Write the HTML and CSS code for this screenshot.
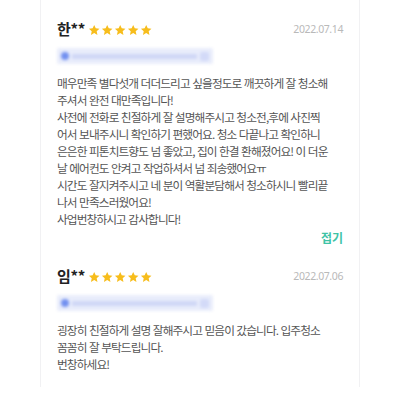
FILE: index.html
```
<!DOCTYPE html>
<html lang="ko">
<head>
<meta charset="utf-8">
<link rel="stylesheet" href="styles.css">
</head>
<body>
<div class="panel">
  <section class="review">
    <div class="head">
      <span class="name">한**</span>
      <span class="stars">
        <svg viewBox="0 0 24 24"><path d="M12 1.8l3 6.6 7.2.8-5.4 4.9 1.5 7.1L12 17.6l-6.3 3.6 1.5-7.1-5.4-4.9 7.2-.8z"/></svg>
        <svg viewBox="0 0 24 24"><path d="M12 1.8l3 6.6 7.2.8-5.4 4.9 1.5 7.1L12 17.6l-6.3 3.6 1.5-7.1-5.4-4.9 7.2-.8z"/></svg>
        <svg viewBox="0 0 24 24"><path d="M12 1.8l3 6.6 7.2.8-5.4 4.9 1.5 7.1L12 17.6l-6.3 3.6 1.5-7.1-5.4-4.9 7.2-.8z"/></svg>
        <svg viewBox="0 0 24 24"><path d="M12 1.8l3 6.6 7.2.8-5.4 4.9 1.5 7.1L12 17.6l-6.3 3.6 1.5-7.1-5.4-4.9 7.2-.8z"/></svg>
        <svg viewBox="0 0 24 24"><path d="M12 1.8l3 6.6 7.2.8-5.4 4.9 1.5 7.1L12 17.6l-6.3 3.6 1.5-7.1-5.4-4.9 7.2-.8z"/></svg>
      </span>
      <span class="date">2022.07.14</span>
    </div>
    <div class="tag"><span class="dot"></span><span class="streak"></span><span class="sq"></span></div>
    <p class="body">매우만족 별다섯개 더더드리고 싶을정도로 깨끗하게 잘 청소해<br>주셔서 완전 대만족입니다!<br>사전에 전화로 친절하게 잘 설명해주시고 청소전,후에 사진찍<br>어서 보내주시니 확인하기 편했어요. 청소 다끝나고 확인하니<br>은은한 피톤치트향도 넘 좋았고, 집이 한결 환해졌어요! 이 더운<br>날 에어컨도 안켜고 작업하셔서 넘 죄송했어요ㅠ<br>시간도 잘지켜주시고 네 분이 역활분담해서 청소하시니 빨리끝<br>나서 만족스러웠어요!<br>사업번창하시고 감사합니다!</p>
    <div class="fold">접기</div>
  </section>
  <section class="review second">
    <div class="head">
      <span class="name">임**</span>
      <span class="stars">
        <svg viewBox="0 0 24 24"><path d="M12 1.8l3 6.6 7.2.8-5.4 4.9 1.5 7.1L12 17.6l-6.3 3.6 1.5-7.1-5.4-4.9 7.2-.8z"/></svg>
        <svg viewBox="0 0 24 24"><path d="M12 1.8l3 6.6 7.2.8-5.4 4.9 1.5 7.1L12 17.6l-6.3 3.6 1.5-7.1-5.4-4.9 7.2-.8z"/></svg>
        <svg viewBox="0 0 24 24"><path d="M12 1.8l3 6.6 7.2.8-5.4 4.9 1.5 7.1L12 17.6l-6.3 3.6 1.5-7.1-5.4-4.9 7.2-.8z"/></svg>
        <svg viewBox="0 0 24 24"><path d="M12 1.8l3 6.6 7.2.8-5.4 4.9 1.5 7.1L12 17.6l-6.3 3.6 1.5-7.1-5.4-4.9 7.2-.8z"/></svg>
        <svg viewBox="0 0 24 24"><path d="M12 1.8l3 6.6 7.2.8-5.4 4.9 1.5 7.1L12 17.6l-6.3 3.6 1.5-7.1-5.4-4.9 7.2-.8z"/></svg>
      </span>
      <span class="date">2022.07.06</span>
    </div>
    <div class="tag"><span class="dot"></span><span class="streak"></span><span class="sq"></span></div>
    <p class="body">굉장히 친절하게 설명 잘해주시고 믿음이 갔습니다. 입주청소<br>꼼꼼히 잘 부탁드립니다.<br>번창하세요!</p>
  </section>
</div>
</body>
</html>
```
FILE: styles.css
```
html, body {
  margin: 0;
  padding: 0;
  background: #ffffff;
}
body {
  font-family: "Noto Sans CJK KR", "Noto Sans", sans-serif;
}
.panel {
  margin: 0 40px;
  height: 387px;
  border-left: 1px solid #f1f1f3;
  border-right: 1px solid #f1f1f3;
  padding: 19px 16px 0;
  box-sizing: border-box;
}
.head {
  display: flex;
  align-items: center;
  height: 20px;
}
.name {
  font-size: 15px;
  font-weight: 700;
  color: #222;
  letter-spacing: -0.3px;
  line-height: 20px;
}
.stars {
  display: flex;
  gap: 0.5px;
  margin-left: 3px;
  margin-top: 2px;
}
.stars svg {
  width: 12.4px;
  height: 12.4px;
  fill: #f7bd1c;
}
.date {
  margin-left: auto;
  font-size: 10.5px;
  letter-spacing: -0.4px;
  color: #b9b9b9;
  font-family: "Noto Sans", sans-serif;
}
.tag {
  margin-top: 9px;
  width: 156px;
  height: 16px;
  background: #e9edfb;
  border-radius: 2px;
  display: flex;
  align-items: center;
  padding: 0 4px;
  box-sizing: border-box;
  gap: 3px;
  filter: blur(1.6px);
}
.tag .dot {
  width: 8px;
  height: 8px;
  border-radius: 50%;
  background: #7290f0;
}
.tag .streak {
  width: 125px;
  height: 5px;
  background: #cfd7f6;
}
.tag .sq {
  margin-left: auto;
  width: 9px;
  height: 9px;
  border-radius: 2px;
  background: #d3daf8;
}
.body {
  margin: 10px 0 0;
  font-size: 11.7px;
  letter-spacing: -0.9px;
  line-height: 17px;
  color: #555;
  white-space: nowrap;
}
.fold {
  text-align: right;
  font-size: 12px;
  font-weight: 700;
  color: #3ec3a6;
  line-height: 17px;
  margin-top: 2px;
}
.second {
  margin-top: 20px;
}
```
